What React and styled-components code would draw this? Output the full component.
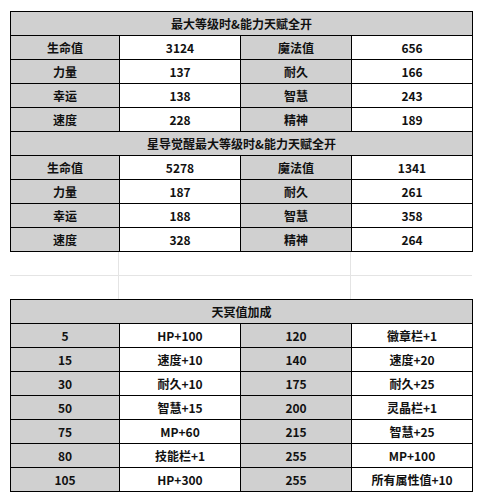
import React from "react";
import styled, { createGlobalStyle } from "styled-components";

const GlobalStyle = createGlobalStyle`
  body {
    margin: 0;
    background: #ffffff;
  }
`;

const stats1 = [
  ["生命值", "3124", "魔法值", "656"],
  ["力量", "137", "耐久", "166"],
  ["幸运", "138", "智慧", "243"],
  ["速度", "228", "精神", "189"],
];

const stats2 = [
  ["生命值", "5278", "魔法值", "1341"],
  ["力量", "187", "耐久", "261"],
  ["幸运", "188", "智慧", "358"],
  ["速度", "328", "精神", "264"],
];

const bonus = [
  ["5", "HP+100", "120", "徽章栏+1"],
  ["15", "速度+10", "140", "速度+20"],
  ["30", "耐久+10", "175", "耐久+25"],
  ["50", "智慧+15", "200", "灵晶栏+1"],
  ["75", "MP+60", "215", "智慧+25"],
  ["80", "技能栏+1", "255", "MP+100"],
  ["105", "HP+300", "255", "所有属性值+10"],
];

export default function App() {
  return (
    <Page>
      <GlobalStyle />
      <Sheet>
        <HeaderCell>最大等级时&amp;能力天赋全开</HeaderCell>
        {stats1.map((row) =>
          row.map((v, i) => (
            <Cell key={row[0] + i} $gray={i % 2 === 0}>
              {v}
            </Cell>
          ))
        )}
        <HeaderCell>星导觉醒最大等级时&amp;能力天赋全开</HeaderCell>
        {stats2.map((row) =>
          row.map((v, i) => (
            <Cell key={"b" + row[0] + i} $gray={i % 2 === 0}>
              {v}
            </Cell>
          ))
        )}
      </Sheet>
      <Gap>
        <GapCell />
        <GapCell />
        <GapCell $last />
        <GapCell $bottom />
        <GapCell $bottom />
        <GapCell $bottom $last />
      </Gap>
      <Sheet>
        <HeaderCell>天冥值加成</HeaderCell>
        {bonus.map((row, r) =>
          row.map((v, i) => (
            <Cell key={"c" + r + i} $gray={i % 2 === 0}>
              {v}
            </Cell>
          ))
        )}
      </Sheet>
    </Page>
  );
}

const Page = styled.div`
  padding: 11px 0 0 10px;
  font-family: "Noto Sans CJK SC", "Liberation Sans", sans-serif;
`;

const Sheet = styled.div`
  display: grid;
  grid-template-columns: 108px 120px 110px 120px;
  grid-auto-rows: 23px;
  gap: 1px;
  padding: 1px;
  width: 463px;
  box-sizing: border-box;
  background: #000000;
`;

const Cell = styled.div`
  display: flex;
  align-items: center;
  justify-content: center;
  background: ${(p) => (p.$gray ? "#d0d0d0" : "#ffffff")};
  color: #111111;
  font-size: 12px;
  font-weight: 700;
  line-height: 1;
`;

const HeaderCell = styled(Cell)`
  grid-column: 1 / -1;
  background: #d0d0d0;
`;

const Gap = styled.div`
  display: grid;
  grid-template-columns: 109px 232px 121px;
  grid-template-rows: 24px 23px;
  width: 462px;
`;

const GapCell = styled.div`
  border-right: ${(p) => (p.$last ? "none" : "1px solid #e4e4e4")};
  border-bottom: ${(p) => (p.$bottom ? "none" : "1px solid #e4e4e4")};
`;
